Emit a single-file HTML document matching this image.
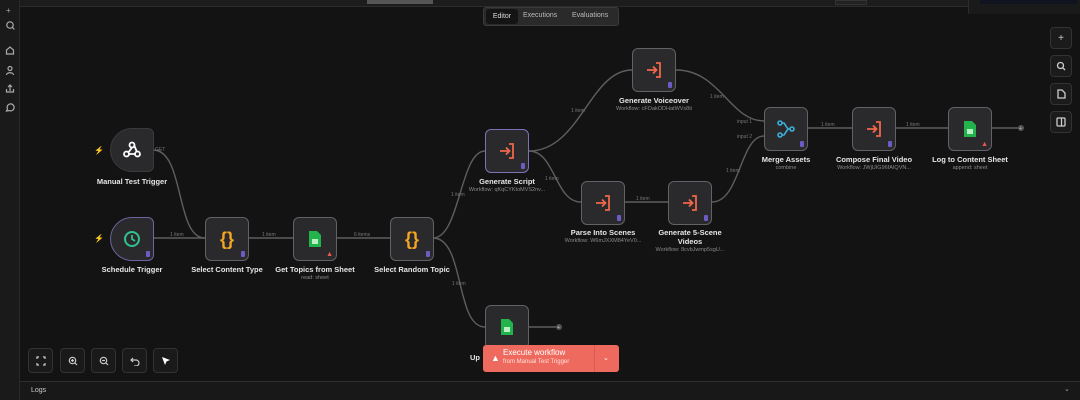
<!DOCTYPE html>
<html><head><meta charset="utf-8"><style>
*{margin:0;padding:0;box-sizing:border-box}
body{width:1080px;height:400px;background:#131313;font-family:"Liberation Sans",sans-serif;color:#ddd;position:relative;overflow:hidden}
.abs{position:absolute}
.side{left:0;top:0;width:20px;height:400px;background:#1a1a1a;border-right:1px solid #2a2a2a}
.top{left:20px;top:0;width:1060px;height:7px;background:#1c1c1c;border-bottom:1px solid #2c2c2c}
.node{position:absolute;width:44px;height:44px;background:#2a2a2c;border:1.5px solid #626266;border-radius:6px;display:flex;align-items:center;justify-content:center}
.lbl{position:absolute;font-size:7.5px;font-weight:bold;color:#e6e6e6;text-align:center;width:130px;white-space:nowrap}
.sub{position:absolute;font-size:5.5px;color:#8a8a8a;text-align:center;width:130px;white-space:nowrap}
.el{position:absolute;font-size:5px;color:#777}
.badge{position:absolute;right:3px;bottom:3px;width:4px;height:6px;background:#6b5bc4;border-radius:1px}
.btn{position:absolute;width:22px;height:22px;border:1px solid #333;border-radius:4px;background:#1b1b1b;display:flex;align-items:center;justify-content:center;color:#ccc;font-size:10px}
.bbtn{position:absolute;width:25px;height:25px;border:1px solid #333;border-radius:4px;background:#1a1a1a;display:flex;align-items:center;justify-content:center;color:#ccc;font-size:10px}
</style></head><body>
<div class="abs side"></div>
<div class="abs top"></div>
<div class="abs" style="left:367px;top:0;width:66px;height:4px;background:#555"></div>
<div class="abs" style="left:835px;top:0;width:32px;height:5px;background:#222;border:1px solid #333"></div>
<div class="abs" style="left:968px;top:0;width:112px;height:14px;background:#1a1a1a;border-left:1px solid #2c2c2c"></div>
<div class="abs" style="left:980px;top:0;width:97px;height:4px;background:#0f1420"></div>
<!-- sidebar icons -->
<div class="abs" style="left:6px;top:6px;font-size:8px;color:#aaa">+</div>
<svg class="abs" style="left:0;top:0" width="20" height="120"><g stroke="#aaa" stroke-width="1.2" fill="none"><circle cx="10" cy="25" r="3.2"/><path d="M12.4 27.4l2 2"/><path d="M6.5 54v-4l3.5-3 3.5 3v4z"/><circle cx="10" cy="68.5" r="2"/><path d="M6.5 75c0-3 7-3 7 0"/><path d="M10 91v-6m-2 2l2-2 2 2M6.5 89v3h7v-3"/><path d="M6.5 111l1-2a3.5 3.5 0 1 1 1.5 1.5z"/></g></svg>
<!-- tabs -->
<div class="abs" style="left:483px;top:7px;width:136px;height:19px;background:#2a2a2a;border:1px solid #3a3a3a;border-radius:3px"></div>
<div class="abs" style="left:486px;top:9px;width:32px;height:15px;background:#141414;border-radius:3px;font-size:7px;color:#ddd;text-align:center;line-height:15px">Editor</div>
<div class="abs" style="left:523px;top:12px;font-size:7px;color:#bbb">Executions</div>
<div class="abs" style="left:572px;top:12px;font-size:7px;color:#bbb">Evaluations</div>
<!-- edges -->
<svg class="abs" style="left:0;top:0" width="1080" height="400"><g stroke="#5e5e5e" stroke-width="1.4" fill="none">
<path d="M153 150C185 150 175 238 205 238"/>
<path d="M153 238H205M248 238H293M336 238H390"/>
<path d="M433 238C460 238 460 151 485 151"/>
<path d="M433 238C465 238 455 327 485 327"/>
<path d="M529 151C580 151 590 70 632 70"/>
<path d="M529 151C555 151 555 202 581 202"/>
<path d="M624 202H668"/>
<path d="M712 202C740 202 740 136 764 136"/>
<path d="M676 70C720 70 730 121 764 121"/>
<path d="M808 128H852M896 128H948M992 128H1018M529 327H556"/>
</g><g fill="#555"><circle cx="1021" cy="128" r="3"/><circle cx="559" cy="327" r="3"/></g>
<g fill="#999" font-size="5" font-family="Liberation Sans"><text x="1019" y="130" fill="#ccc">+</text><text x="557" y="329" fill="#ccc">+</text></g></svg>
<!-- edge labels -->
<div class="el" style="left:155px;top:147px">GET</div>
<div class="el" style="left:170px;top:232px">1 item</div>
<div class="el" style="left:262px;top:232px">1 item</div>
<div class="el" style="left:354px;top:232px">6 items</div>
<div class="el" style="left:451px;top:192px">1 item</div>
<div class="el" style="left:452px;top:281px">1 item</div>
<div class="el" style="left:571px;top:108px">1 item</div>
<div class="el" style="left:545px;top:176px">1 item</div>
<div class="el" style="left:636px;top:196px">1 item</div>
<div class="el" style="left:710px;top:94px">1 item</div>
<div class="el" style="left:726px;top:168px">1 item</div>
<div class="el" style="left:737px;top:119px">input 1</div>
<div class="el" style="left:737px;top:134px">input 2</div>
<div class="el" style="left:821px;top:122px">1 item</div>
<div class="el" style="left:906px;top:122px">1 item</div>
<!-- nodes -->
<div class="node" style="left:110px;top:128px;border-radius:22px 6px 6px 22px;border-color:#3a3a3c">
<svg width="20" height="20" viewBox="0 0 20 20" fill="none" stroke="#fff" stroke-width="1.8"><circle cx="10" cy="5" r="2.5"/><circle cx="4.5" cy="14" r="2.5"/><circle cx="15.5" cy="14" r="2.5"/><path d="M10 7.5L6 13M7 14h6M12 5l3 7"/></svg></div>
<div class="abs" style="left:94px;top:146px;color:#e8554e;font-size:8px">⚡</div>
<div class="lbl" style="left:67px;top:177px">Manual Test Trigger</div>

<div class="node" style="left:110px;top:217px;border-radius:22px 6px 6px 22px;border-color:#6b66a0">
<svg width="20" height="20"><circle cx="10" cy="10" r="7" stroke="#2fc28f" stroke-width="2" fill="none"/><path d="M10 6v4l3 2" stroke="#2fc28f" stroke-width="1.8" fill="none"/></svg><div class="badge"></div></div>
<div class="abs" style="left:94px;top:234px;color:#e8554e;font-size:8px">⚡</div>
<div class="lbl" style="left:67px;top:265px">Schedule Trigger</div>

<div class="node" style="left:205px;top:217px"><span style="color:#f5a623;font-size:18px;font-weight:bold">{}</span><div class="badge"></div></div>
<div class="lbl" style="left:162px;top:265px">Select Content Type</div>

<div class="node" style="left:293px;top:217px"><svg width="14" height="18"><path d="M1 1h8l4 4v12H1z" fill="#22b34c"/><rect x="4" y="9" width="6" height="5" fill="#b9f0c6"/></svg><span style="position:absolute;right:3px;bottom:2px;color:#f05555;font-size:7px">▲</span></div>
<div class="lbl" style="left:250px;top:265px">Get Topics from Sheet</div>
<div class="sub" style="left:250px;top:275px">read: sheet</div>

<div class="node" style="left:390px;top:217px"><span style="color:#f5a623;font-size:18px;font-weight:bold">{}</span><div class="badge"></div></div>
<div class="lbl" style="left:347px;top:265px">Select Random Topic</div>

<div class="node" style="left:485px;top:129px;border-color:#7c72b8"><svg width="18" height="18" fill="none" stroke="#f0674a" stroke-width="1.8"><path d="M2 9h9M8 5.5L11.5 9 8 12.5M11 2h4v14h-4"/></svg><div class="badge"></div></div>
<div class="lbl" style="left:442px;top:177px">Generate Script</div>
<div class="sub" style="left:442px;top:187px">Workflow: qKqCYKtoMVS2nv...</div>

<div class="node" style="left:632px;top:48px"><svg width="18" height="18" fill="none" stroke="#f0674a" stroke-width="1.8"><path d="M2 9h9M8 5.5L11.5 9 8 12.5M11 2h4v14h-4"/></svg><div class="badge"></div></div>
<div class="lbl" style="left:589px;top:96px">Generate Voiceover</div>
<div class="sub" style="left:589px;top:106px">Workflow: cFOakODHatWVs8ti</div>

<div class="node" style="left:581px;top:181px"><svg width="18" height="18" fill="none" stroke="#f0674a" stroke-width="1.8"><path d="M2 9h9M8 5.5L11.5 9 8 12.5M11 2h4v14h-4"/></svg><div class="badge"></div></div>
<div class="lbl" style="left:538px;top:228px">Parse Into Scenes</div>
<div class="sub" style="left:538px;top:238px">Workflow: W6mJXXM84YeV0...</div>

<div class="node" style="left:668px;top:181px"><svg width="18" height="18" fill="none" stroke="#f0674a" stroke-width="1.8"><path d="M2 9h9M8 5.5L11.5 9 8 12.5M11 2h4v14h-4"/></svg><div class="badge"></div></div>
<div class="lbl" style="left:625px;top:228px;line-height:9px">Generate 5-Scene<br>Videos</div>
<div class="sub" style="left:625px;top:247px">Workflow: 8cvbJwmp5sgU...</div>

<div class="node" style="left:764px;top:107px"><svg width="20" height="20" fill="none" stroke="#3ab0d8" stroke-width="1.6"><circle cx="4" cy="4" r="2"/><circle cx="4" cy="16" r="2"/><circle cx="16" cy="10" r="2"/><path d="M6 4h2l4 6h2M6 16h2l4-6"/></svg><div class="badge"></div></div>
<div class="lbl" style="left:721px;top:155px">Merge Assets</div>
<div class="sub" style="left:721px;top:165px">combine</div>

<div class="node" style="left:852px;top:107px"><svg width="18" height="18" fill="none" stroke="#f0674a" stroke-width="1.8"><path d="M2 9h9M8 5.5L11.5 9 8 12.5M11 2h4v14h-4"/></svg><div class="badge"></div></div>
<div class="lbl" style="left:809px;top:155px">Compose Final Video</div>
<div class="sub" style="left:809px;top:165px">Workflow: JWjUIG96fAIQVN...</div>

<div class="node" style="left:948px;top:107px"><svg width="14" height="18"><path d="M1 1h8l4 4v12H1z" fill="#22b34c"/><rect x="4" y="9" width="6" height="5" fill="#b9f0c6"/></svg><span style="position:absolute;right:3px;bottom:2px;color:#f05555;font-size:7px">▲</span></div>
<div class="lbl" style="left:905px;top:155px">Log to Content Sheet</div>
<div class="sub" style="left:905px;top:165px">append: sheet</div>

<div class="node" style="left:485px;top:305px"><svg width="14" height="18"><path d="M1 1h8l4 4v12H1z" fill="#22b34c"/><rect x="4" y="9" width="6" height="5" fill="#b9f0c6"/></svg></div>
<div class="lbl" style="left:470px;top:353px;width:20px;text-align:left">Up</div>
<!-- execute button -->
<div class="abs" style="left:483px;top:345px;width:136px;height:27px;background:#ef6a5e;border-radius:3px"></div>
<div class="abs" style="left:594px;top:345px;width:1px;height:27px;background:#d85a50"></div>
<div class="abs" style="left:491px;top:353px;color:#fff;font-size:9px">▲</div>
<div class="abs" style="left:503px;top:348px;color:#fff;font-size:8px">Execute workflow</div>
<div class="abs" style="left:503px;top:359px;color:#ffe0dc;font-size:6px">from Manual Test Trigger</div>
<div class="abs" style="left:603px;top:354px;color:#fff;font-size:7px">⌄</div>
<!-- right controls -->
<div class="btn" style="left:1050px;top:27px">+</div>
<div class="btn" style="left:1050px;top:55px"><svg width="10" height="10" fill="none" stroke="#ccc" stroke-width="1.3"><circle cx="4.5" cy="4.5" r="3"/><path d="M7 7l2 2"/></svg></div>
<div class="btn" style="left:1050px;top:83px"><svg width="10" height="10" fill="none" stroke="#ccc" stroke-width="1.3"><path d="M2 1h4l3 3v5H2z"/></svg></div>
<div class="btn" style="left:1050px;top:111px"><svg width="10" height="10" fill="none" stroke="#ccc" stroke-width="1.3"><rect x="1" y="1" width="8" height="8" rx="1"/><path d="M5.5 1v8"/></svg></div>
<!-- bottom-left controls -->
<div class="bbtn" style="left:28px;top:348px"><svg width="10" height="10" fill="none" stroke="#ccc" stroke-width="1.2"><path d="M1 3V1h2M7 1h2v2M9 7v2H7M3 9H1V7"/></svg></div>
<div class="bbtn" style="left:60px;top:348px"><svg width="10" height="10" fill="none" stroke="#ccc" stroke-width="1.2"><circle cx="4.5" cy="4.5" r="3.2"/><path d="M7 7l2 2M3 4.5h3M4.5 3v3"/></svg></div>
<div class="bbtn" style="left:91px;top:348px"><svg width="10" height="10" fill="none" stroke="#ccc" stroke-width="1.2"><circle cx="4.5" cy="4.5" r="3.2"/><path d="M7 7l2 2M3 4.5h3"/></svg></div>
<div class="bbtn" style="left:122px;top:348px"><svg width="10" height="10" fill="none" stroke="#ccc" stroke-width="1.2"><path d="M3 2L1 4l2 2M1 4h5a3 3 0 0 1 0 6H4"/></svg></div>
<div class="bbtn" style="left:153px;top:348px"><svg width="10" height="10"><path d="M1 1l8 3-3.5 1.5L4 9z" fill="#fff"/></svg></div>
<!-- logs -->
<div class="abs" style="left:20px;top:381px;width:1060px;height:19px;background:#181818;border-top:1px solid #2e2e2e"></div>
<div class="abs" style="left:31px;top:387px;font-size:7px;color:#ccc">Logs</div>
<div class="abs" style="left:1064px;top:385px;font-size:7px;color:#aaa">⌄</div>
</body></html>
